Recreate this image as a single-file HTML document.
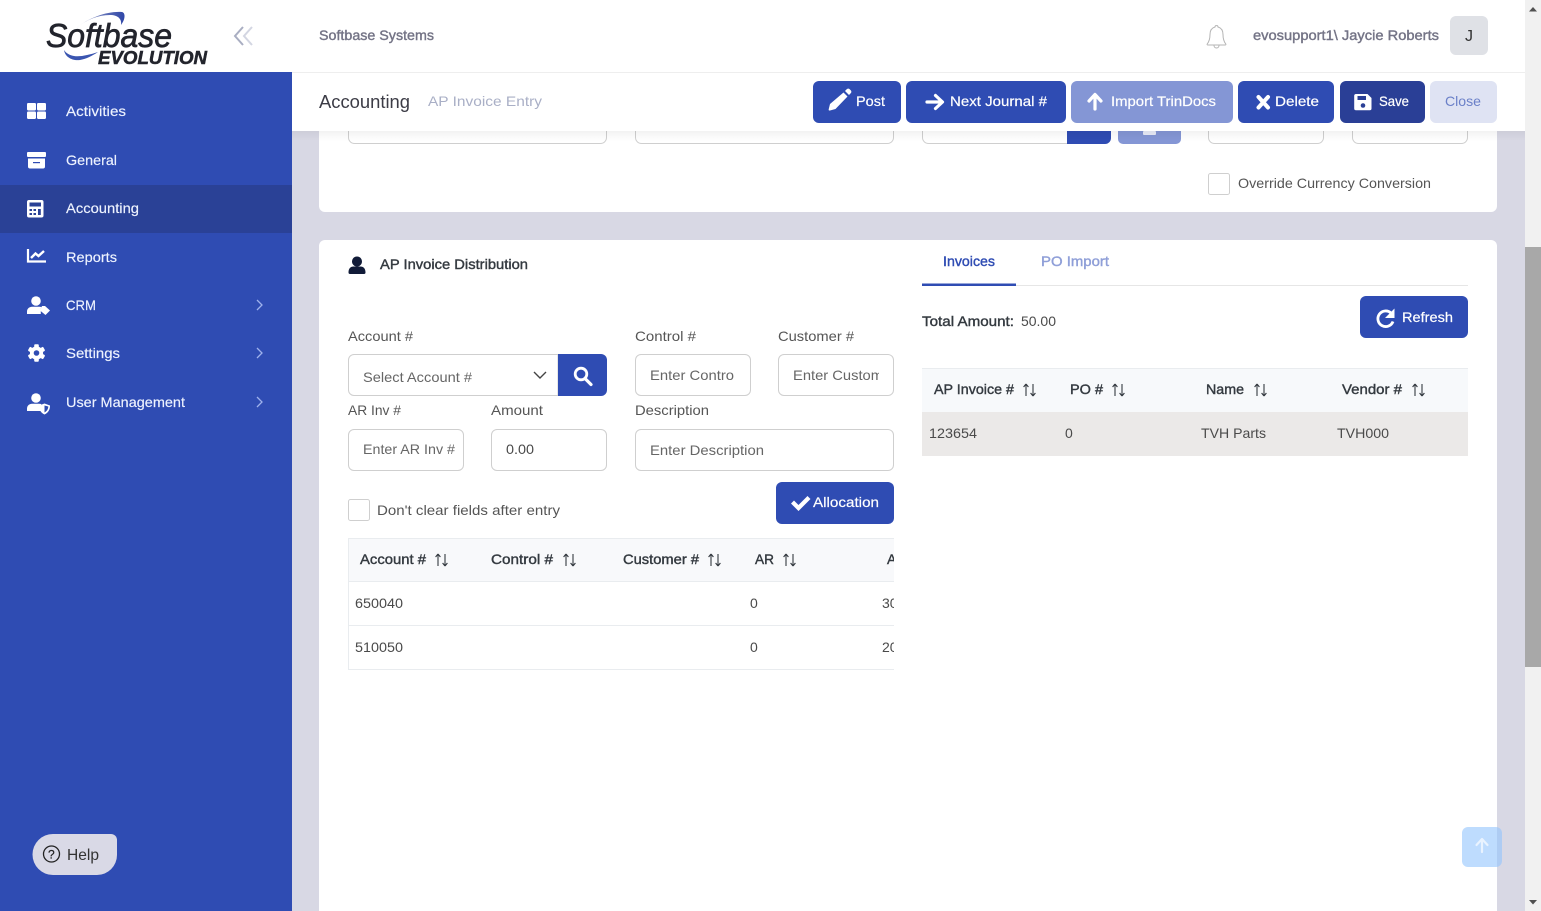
<!DOCTYPE html>
<html lang="en"><head><meta charset="utf-8"><title>AP Invoice Entry</title>
<style>
html,body{margin:0;padding:0;width:1541px;height:911px;overflow:hidden;background:#d8d8e4}
svg{position:absolute;left:0;top:0;display:block}
text{font-family:"Liberation Sans",sans-serif;font-size:14px;fill:#4a4a4a}
.n{fill:#eef3ff;font-size:14px;stroke:#eef3ff;stroke-width:.15px}
.h{fill:#343a40;stroke:#343a40;stroke-width:.4px;font-size:14px}
.b{fill:#fff;font-size:14px;stroke:#fff;stroke-width:.2px}
.l{fill:#555}
.p{fill:#666}
.f{fill:none;stroke:#cfcfcf;stroke-width:1}
.s{fill:none;stroke:#343a40;stroke-width:1.1}
</style></head><body>
<svg width="1541" height="911" viewBox="0 0 1541 911" xmlns="http://www.w3.org/2000/svg">
<defs>
<clipPath id="tc"><rect x="348" y="530" width="546" height="145"/></clipPath>
<clipPath id="cc"><rect x="790" y="360" width="89" height="30"/></clipPath>
<linearGradient id="sh" x1="0" y1="0" x2="0" y2="1"><stop offset="0" stop-color="#000" stop-opacity=".05"/><stop offset="1" stop-color="#000" stop-opacity="0"/></linearGradient>
<linearGradient id="sw" x1="0" y1="0" x2="1" y2="0"><stop offset="0" stop-color="#a4aacb"/><stop offset="1" stop-color="#2f47a8"/></linearGradient>
<g id="sort"><path class="s" d="M3 14V2M3 2L.6 5M3 2L5.4 5"/><path class="s" d="M10 2V14M10 14L7.6 11M10 14L12.400 11"/></g>
<g id="chev"><path d="M0 0L5 5L0 10" fill="none" stroke="#9fb2ec" stroke-width="1.300"/></g>
</defs>

<!-- page background -->
<rect width="1541" height="911" fill="#d8d8e4"/>

<!-- card 1 -->
<rect x="319" y="100" width="1178" height="112" rx="6" fill="#fff"/>
<rect x="348.500" y="100" width="258" height="43.500" rx="6" class="f"/>
<rect x="635.500" y="100" width="258" height="43.500" rx="6" class="f"/>
<rect x="922.500" y="100" width="188" height="43.500" rx="6" class="f"/>
<path d="M1067 100h44v38a6 6 0 0 1-6 6h-38z" fill="#2f4cb3"/>
<rect x="1118" y="100" width="63" height="44" rx="5" fill="#8496d5"/>
<rect x="1143" y="131" width="13" height="4" rx="1" fill="#e8ebf7"/>
<rect x="1208.500" y="100" width="115" height="43.500" rx="6" class="f"/>
<rect x="1352.500" y="100" width="115" height="43.500" rx="6" class="f"/>
<rect x="1208.500" y="173.500" width="21" height="21" rx="2" class="f"/>
<text x="1238" y="188" textLength="193" lengthAdjust="spacingAndGlyphs" class="l">Override Currency Conversion</text>

<!-- card 2 -->
<rect x="319" y="240" width="1178" height="700" rx="6" fill="#fff"/>
<path d="M357 256.500a5 5 0 1 1-.01 0zM348.500 272.500c0-4 2-6 5-6h7c3 0 5 2 5 6c0 1-.5 1.500-1.500 1.500h-14c-1 0-1.500-.5-1.500-1.500z" fill="#111b38"/>
<text x="380" y="269" textLength="148" lengthAdjust="spacingAndGlyphs" class="h">AP Invoice Distribution</text>

<text x="348" y="341" textLength="65" lengthAdjust="spacingAndGlyphs" class="l">Account #</text>
<text x="635" y="341" textLength="61" lengthAdjust="spacingAndGlyphs" class="l">Control #</text>
<text x="778" y="341" textLength="76" lengthAdjust="spacingAndGlyphs" class="l">Customer #</text>

<path d="M354 354.500h204v41h-204a5.500 5.500 0 0 1-5.500-5.500v-30a5.500 5.500 0 0 1 5.500-5.500z" class="f"/>
<text x="363" y="382" textLength="109" lengthAdjust="spacingAndGlyphs" class="p">Select Account #</text>
<path d="M534 372l6 6l6-6" fill="none" stroke="#444" stroke-width="1.400"/>
<path d="M558 354h43a6 6 0 0 1 6 6v30a6 6 0 0 1-6 6h-43z" fill="#2f4cb3"/>
<circle cx="581" cy="374" r="5.800" fill="none" stroke="#fff" stroke-width="2.800"/>
<path d="M585 378.500l6 6" stroke="#fff" stroke-width="3.200" stroke-linecap="round"/>

<rect x="635.500" y="354.500" width="115" height="41" rx="5.500" class="f"/>
<text x="650" y="380" textLength="84" lengthAdjust="spacingAndGlyphs" class="p">Enter Contro</text>
<rect x="778.500" y="354.500" width="115" height="41" rx="5.500" class="f"/>
<g clip-path="url(#cc)"><text x="793" y="380" textLength="90" lengthAdjust="spacingAndGlyphs" class="p">Enter Custom</text></g>

<text x="348" y="415" textLength="53" lengthAdjust="spacingAndGlyphs" class="l">AR Inv #</text>
<text x="491" y="415" textLength="52" lengthAdjust="spacingAndGlyphs" class="l">Amount</text>
<text x="635" y="415" textLength="74" lengthAdjust="spacingAndGlyphs" class="l">Description</text>

<rect x="348.500" y="429.500" width="115" height="41" rx="5.500" class="f"/>
<text x="363" y="454" textLength="92" lengthAdjust="spacingAndGlyphs" class="p">Enter AR Inv #</text>
<rect x="491.500" y="429.500" width="115" height="41" rx="5.500" class="f"/>
<text x="506" y="454" textLength="28" lengthAdjust="spacingAndGlyphs">0.00</text>
<rect x="635.500" y="429.500" width="258" height="41" rx="5.500" class="f"/>
<text x="650" y="455" textLength="114" lengthAdjust="spacingAndGlyphs" class="p">Enter Description</text>

<rect x="348.500" y="499.500" width="21" height="21" rx="2" class="f"/>
<text x="377" y="515" textLength="183" lengthAdjust="spacingAndGlyphs" class="l">Don't clear fields after entry</text>

<rect x="776" y="482" width="118" height="42" rx="6" fill="#2f4cb3"/>
<path d="M791 503.500l3-3l4.500 4.500l9-9l3 3l-12 12z" fill="#fff"/>
<text x="813" y="507" textLength="66" lengthAdjust="spacingAndGlyphs" class="b">Allocation</text>

<!-- left table -->
<g clip-path="url(#tc)">
<rect x="348" y="538" width="546" height="44" fill="#f8f9fb"/>
<path d="M348 538.500h546M348 581.500h546M348 625.500h546M348 669.500h546M348.500 538v131" stroke="#e9ecef" fill="none"/>
<text x="360" y="564" textLength="66" lengthAdjust="spacingAndGlyphs" class="h">Account #</text>
<use href="#sort" x="435" y="552"/>
<text x="491" y="564" textLength="62" lengthAdjust="spacingAndGlyphs" class="h">Control #</text>
<use href="#sort" x="563" y="552"/>
<text x="623" y="564" textLength="76" lengthAdjust="spacingAndGlyphs" class="h">Customer #</text>
<use href="#sort" x="708" y="552"/>
<text x="755" y="564" textLength="19" lengthAdjust="spacingAndGlyphs" class="h">AR</text>
<use href="#sort" x="783" y="552"/>
<text x="887" y="564" class="h">A</text>
<text x="355" y="608" textLength="48" lengthAdjust="spacingAndGlyphs">650040</text>
<text x="750" y="608">0</text>
<text x="882" y="608">30</text>
<text x="355" y="652" textLength="48" lengthAdjust="spacingAndGlyphs">510050</text>
<text x="750" y="652">0</text>
<text x="882" y="652">20</text>
</g>

<!-- tabs -->
<text x="943" y="266" textLength="52" lengthAdjust="spacingAndGlyphs" style="fill:#2f4cb3;stroke:#2f4cb3;stroke-width:.4px">Invoices</text>
<text x="1041" y="266" textLength="68" lengthAdjust="spacingAndGlyphs" style="fill:#8f9fd8;stroke:#8f9fd8;stroke-width:.4px">PO Import</text>
<rect x="922" y="285" width="546" height="1" fill="#e6e6e6"/>
<rect x="922" y="283.500" width="94" height="2.500" fill="#2f4cb3"/>

<text x="922" y="326" textLength="92" lengthAdjust="spacingAndGlyphs" class="h">Total Amount:</text>
<text x="1021" y="326" textLength="35" lengthAdjust="spacingAndGlyphs">50.00</text>

<rect x="1360" y="296" width="108" height="42" rx="6" fill="#2f4cb3"/>
<path d="M1391 313a7.800 7.800 0 1 0 2 8.500" fill="none" stroke="#fff" stroke-width="2.800"/>
<path d="M1394.500 308.500v9.500h-9.500z" fill="#fff"/>
<text x="1402" y="322" textLength="51" lengthAdjust="spacingAndGlyphs" class="b">Refresh</text>

<!-- right table -->
<rect x="922" y="368" width="546" height="44" fill="#f7f9fb"/>
<path d="M922 368.500h546" stroke="#e9ecef"/>
<rect x="922" y="412" width="546" height="44" fill="#ebe9e8"/>
<text x="934" y="394" textLength="80" lengthAdjust="spacingAndGlyphs" class="h">AP Invoice #</text>
<use href="#sort" x="1023" y="382"/>
<text x="1070" y="394" textLength="33" lengthAdjust="spacingAndGlyphs" class="h">PO #</text>
<use href="#sort" x="1112" y="382"/>
<text x="1206" y="394" textLength="38" lengthAdjust="spacingAndGlyphs" class="h">Name</text>
<use href="#sort" x="1254" y="382"/>
<text x="1342" y="394" textLength="60" lengthAdjust="spacingAndGlyphs" class="h">Vendor #</text>
<use href="#sort" x="1412" y="382"/>
<text x="929" y="438" textLength="48" lengthAdjust="spacingAndGlyphs">123654</text>
<text x="1065" y="438">0</text>
<text x="1201" y="438" textLength="65" lengthAdjust="spacingAndGlyphs">TVH Parts</text>
<text x="1337" y="438" textLength="52" lengthAdjust="spacingAndGlyphs">TVH000</text>

<!-- header -->
<rect x="292" y="131" width="1233" height="10" fill="url(#sh)"/>
<rect x="292" y="0" width="1233" height="131" fill="#fff"/>
<rect x="292" y="72" width="1233" height="1" fill="#eeeeee"/>
<text x="319" y="40" textLength="115" lengthAdjust="spacingAndGlyphs" style="fill:#747486;stroke:#747486;stroke-width:.4px">Softbase Systems</text>
<path d="M1216.500 25.500c-1 0-1.500.7-1.500 1.500c-3.500 1-5 4-5 7.500c0 4-.8 7-2.800 9.500c-.3.500 0 1 .5 1h17.600c.5 0 .8-.5.500-1c-2-2.500-2.800-5.500-2.800-9.500c0-3.500-1.500-6.500-5-7.500c0-.8-.5-1.500-1.500-1.500zM1214 45.500a2.500 2.500 0 0 0 5 0" fill="none" stroke="#b4b4b4" stroke-width="1"/>
<text x="1253" y="40" textLength="186" lengthAdjust="spacingAndGlyphs" style="fill:#747486;stroke:#747486;stroke-width:.4px">evosupport1\ Jaycie Roberts</text>
<rect x="1450" y="16" width="38" height="39" rx="6" fill="#dfe1e6"/>
<text x="1465" y="41" style="font-size:16px;fill:#333">J</text>

<text x="319" y="108" textLength="91" lengthAdjust="spacingAndGlyphs" style="font-size:18px;fill:#3c3c46">Accounting</text>
<text x="428" y="106" textLength="114" lengthAdjust="spacingAndGlyphs" style="fill:#a9afc6">AP Invoice Entry</text>

<!-- action buttons -->
<rect x="813" y="81" width="88" height="42" rx="6" fill="#2f4cb3"/>
<path d="M843.500 92.500l4 4l-12 12.500l-5.500 1.500c-1 .2-1.500-.3-1.300-1.300l1.300-5.200zM845 91l1.700-1.700c.9-.9 2.200-.9 3 0l1 1c.9.900.9 2.200 0 3l-1.700 1.700z" fill="#fff"/>
<text x="856" y="106" textLength="29" lengthAdjust="spacingAndGlyphs" class="b">Post</text>

<rect x="906" y="81" width="160" height="42" rx="6" fill="#2f4cb3"/>
<path d="M927 102h13M935.500 95.500l7 6.500l-7 6.500" fill="none" stroke="#fff" stroke-width="3.200" stroke-linecap="round" stroke-linejoin="round"/>
<text x="950" y="106" textLength="97" lengthAdjust="spacingAndGlyphs" class="b">Next Journal #</text>

<rect x="1071" y="81" width="162" height="42" rx="6" fill="#8496d5"/>
<path d="M1095 109V95M1089 101l6-6.500l6 6.500" fill="none" stroke="#fff" stroke-width="3.200" stroke-linecap="round" stroke-linejoin="round"/>
<text x="1111" y="106" textLength="105" lengthAdjust="spacingAndGlyphs" class="b">Import TrinDocs</text>

<rect x="1238" y="81" width="96" height="42" rx="6" fill="#2f4cb3"/>
<path d="M1258.500 97l9.500 10.500M1268 97l-9.500 10.500" fill="none" stroke="#fff" stroke-width="4" stroke-linecap="round"/>
<text x="1275" y="106" textLength="44" lengthAdjust="spacingAndGlyphs" class="b">Delete</text>

<rect x="1340" y="81" width="85" height="42" rx="6" fill="#2a3f96"/>
<path d="M1356 94h11.500l4 4v10.500a1.800 1.800 0 0 1-1.800 1.800h-13.700a1.800 1.800 0 0 1-1.800-1.800v-12.700a1.800 1.800 0 0 1 1.800-1.800z" fill="#fff"/>
<rect x="1357.500" y="96" width="8.500" height="4" fill="#2a3f96"/>
<circle cx="1363" cy="105.500" r="2.300" fill="#2a3f96"/>
<text x="1379" y="106" textLength="30" lengthAdjust="spacingAndGlyphs" class="b">Save</text>

<rect x="1430" y="81" width="67" height="42" rx="6" fill="#dfe3f3"/>
<text x="1445" y="106" textLength="36" lengthAdjust="spacingAndGlyphs" style="fill:#6b80c8">Close</text>

<!-- sidebar -->
<rect x="0" y="72" width="292" height="839" fill="#2f4cb3"/>
<rect x="0" y="0" width="292" height="72" fill="#fff"/>
<rect x="0" y="185" width="292" height="48" fill="#2a4196"/>

<!-- logo -->
<path d="M76 28C90 17 108 11 122 12C126 13 125 20 121 25C122 19 118 15 110 15C98 15 86 20 76 28z" fill="url(#sw)"/>
<path d="M64 50C65 57 72 61 80 60C86 59 92 56 98 52C89 55 80 57 74 56C69 55 66 53 64 50z" fill="#3a55b0"/>
<text x="46" y="47" textLength="126" lengthAdjust="spacingAndGlyphs" style="font-size:33px;font-style:italic;fill:#22242c;stroke:#22242c;stroke-width:.7px">Softbase</text>
<text x="98" y="64" textLength="109" lengthAdjust="spacingAndGlyphs" style="font-size:18px;font-style:italic;font-weight:bold;fill:#22242c;stroke:#22242c;stroke-width:.5px">EVOLUTION</text>
<path d="M243 27l-8 9l8 9" fill="none" stroke="#a9aec2" stroke-width="2"/>
<path d="M252 27l-8 9l8 9" fill="none" stroke="#d3d6e2" stroke-width="2"/>

<!-- nav icons -->
<g fill="#fff">
<rect x="27" y="103" width="9" height="7.500" rx="1.200"/><rect x="37" y="103" width="9" height="7.500" rx="1.200"/>
<rect x="27" y="111.500" width="9" height="7.500" rx="1.200"/><rect x="37" y="111.500" width="9" height="7.500" rx="1.200"/>
<rect x="27" y="152" width="19" height="5" rx="1"/>
<path d="M28 158.500h17v8a2 2 0 0 1-2 2h-13a2 2 0 0 1-2-2z"/>
<rect x="27" y="200" width="16.500" height="17.500" rx="2"/>
</g>
<rect x="33" y="162" width="7" height="1.200" fill="#2f4cb3"/>
<g fill="#2a4196">
<rect x="29.500" y="202.500" width="11.500" height="4"/>
<rect x="29.500" y="209" width="2.500" height="2"/><rect x="33.500" y="209" width="2.500" height="2"/><rect x="38" y="209" width="2.800" height="6"/>
<rect x="29.500" y="213" width="2.500" height="2"/><rect x="33.500" y="213" width="2.500" height="2"/>
</g>
<path d="M28 249v12.500h18" fill="none" stroke="#fff" stroke-width="2.200"/>
<path d="M31 258l4.500-4.500l3 2.500l5.500-5" fill="none" stroke="#fff" stroke-width="2.400"/>
<g fill="#fff">
<circle cx="36" cy="301" r="4.800"/>
<path d="M27 314v-2.500c0-3 2.500-4.800 5-4.800h7c1 0 2 .2 2.800.6l-1 1.200v5.500z"/>
<path d="M42 306h3l5 4.500l-4.500 4.500l-5.500-4.500z"/>
<circle cx="36" cy="398" r="4.800"/>
<path d="M27 411v-2.500c0-3 2.500-4.800 5-4.800h7c.8 0 1.500.1 2.200.3v7z"/>
<path d="M44.500 403.500l5.500 2c0 4-1.500 7-5.500 9c-4-2-5.500-5-5.500-9z"/>
</g>
<path d="M44.500 405.500v7c2.500-1.500 3.700-3.500 3.800-6z" fill="#2f4cb3"/>
<g transform="translate(36.500 353)" fill="#fff">
<circle r="6.600"/>
<rect x="-2.300" y="-8.800" width="4.600" height="17.600" rx="1"/>
<rect x="-2.300" y="-8.800" width="4.600" height="17.600" rx="1" transform="rotate(60)"/>
<rect x="-2.300" y="-8.800" width="4.600" height="17.600" rx="1" transform="rotate(120)"/>
<circle r="2.800" fill="#2f4cb3"/>
</g>

<text x="66" y="116" textLength="60" lengthAdjust="spacingAndGlyphs" class="n">Activities</text>
<text x="66" y="165" textLength="51" lengthAdjust="spacingAndGlyphs" class="n">General</text>
<text x="66" y="213" textLength="73" lengthAdjust="spacingAndGlyphs" class="n">Accounting</text>
<text x="66" y="262" textLength="51" lengthAdjust="spacingAndGlyphs" class="n">Reports</text>
<text x="66" y="310" textLength="30" lengthAdjust="spacingAndGlyphs" class="n">CRM</text>
<text x="66" y="358" textLength="54" lengthAdjust="spacingAndGlyphs" class="n">Settings</text>
<text x="66" y="407" textLength="119" lengthAdjust="spacingAndGlyphs" class="n">User Management</text>
<use href="#chev" x="257" y="300"/>
<use href="#chev" x="257" y="348"/>
<use href="#chev" x="257" y="397"/>

<!-- help -->
<path d="M53 834h58a6 6 0 0 1 6 6v15a20 20 0 0 1-20 20h-44a20.500 20.500 0 0 1 0-41z" fill="#d9d9e6"/>
<circle cx="51.500" cy="854" r="8" fill="none" stroke="#222" stroke-width="1.300"/>
<text x="48" y="858.500" style="font-size:12px;fill:#222;stroke:#222;stroke-width:.2px">?</text>
<text x="67" y="860" textLength="32" lengthAdjust="spacingAndGlyphs" style="font-size:16px;fill:#333">Help</text>

<!-- scrollbar -->
<rect x="1525" y="0" width="16" height="911" fill="#f1f1f1"/>
<rect x="1525" y="247" width="16" height="420" fill="#a8a8a8"/>
<path d="M1529 11.500h8l-4-4.500z" fill="#505050"/>
<path d="M1529 900h8l-4 4.500z" fill="#505050"/>

<!-- back to top -->
<rect x="1462" y="827" width="40" height="40" rx="6" fill="#93c5fd" fill-opacity=".6"/>
<path d="M1482 852v-12M1476.500 845l5.500-6l5.500 6" fill="none" stroke="#e9f3ff" stroke-width="2.200" stroke-linecap="round" stroke-linejoin="round"/>
</svg>
</body></html>
